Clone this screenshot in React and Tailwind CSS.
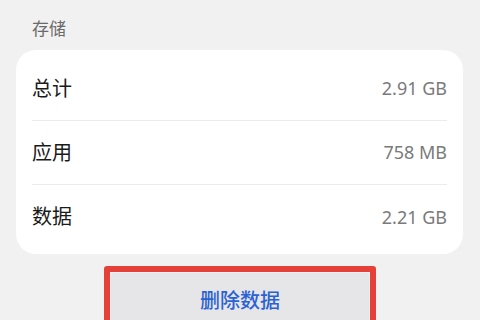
export default function App() {
  const rows = [
    ["总计", "2.91 GB"],
    ["应用", "758 MB"],
    ["数据", "2.21 GB"],
  ];
  return (
    <div
      className="w-[480px] h-[320px] overflow-hidden bg-[#f1f1f1] flex flex-col"
      style={{ fontFamily: '"Noto Sans", "Noto Sans CJK SC", sans-serif' }}
    >
      <div className="shrink-0 h-[50px] pl-8 pt-[16px] text-[17px] leading-[26px] text-[#6a6a6a]">存储</div>
      <div className="shrink-0 mx-4 w-[447px] bg-white rounded-[20px] px-4 pt-[7px] pb-[5px]">
        {rows.map(([k, v], i) => (
          <div
            key={k}
            className={
              "h-[64px] flex items-center justify-between " +
              (i < rows.length - 1 ? "border-b border-[#ececec]" : "")
            }
          >
            <span className="text-[20px] text-[#1a1a1a]">{k}</span>
            <span className="text-[18px] text-[#7a7a7a]">{v}</span>
          </div>
        ))}
      </div>
      <div className="shrink-0 flex justify-center mt-[12px]">
        <div className="w-[272px] h-[80px] border-[6px] border-[#e5413a] rounded-[3px] p-[1px]">
          <div className="h-full bg-[#e6e6e8] rounded-t-[2px] flex justify-center pt-[14px]">
            <span className="text-[20px] leading-[28px] font-medium text-[#2a62d4]">删除数据</span>
          </div>
        </div>
      </div>
    </div>
  );
}
